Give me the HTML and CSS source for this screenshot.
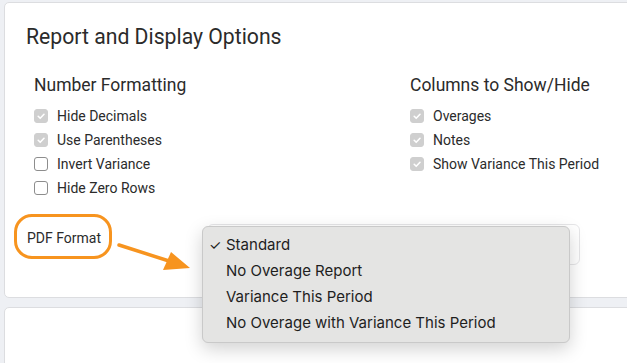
FILE: index.html
```html
<!DOCTYPE html>
<html>
<head>
<meta charset="utf-8">
<link rel="stylesheet" href="styles.css">
</head>
<body>
<div class="page">
  <section class="card options">
    <h1 class="title">Report and Display Options</h1>
    <div class="cols">
      <div class="col col-left">
        <h2 class="subtitle">Number Formatting</h2>
        <ul class="checks">
          <li><span class="box on"><svg viewBox="0 0 14 14"><path d="M4.2 7.3l2 2 3.8-4" /></svg></span>Hide Decimals</li>
          <li><span class="box on"><svg viewBox="0 0 14 14"><path d="M4.2 7.3l2 2 3.8-4" /></svg></span>Use Parentheses</li>
          <li><span class="box"></span>Invert Variance</li>
          <li><span class="box"></span>Hide Zero Rows</li>
        </ul>
      </div>
      <div class="col col-right">
        <h2 class="subtitle">Columns to Show/Hide</h2>
        <ul class="checks">
          <li><span class="box on"><svg viewBox="0 0 14 14"><path d="M4.2 7.3l2 2 3.8-4" /></svg></span>Overages</li>
          <li><span class="box on"><svg viewBox="0 0 14 14"><path d="M4.2 7.3l2 2 3.8-4" /></svg></span>Notes</li>
          <li><span class="box on"><svg viewBox="0 0 14 14"><path d="M4.2 7.3l2 2 3.8-4" /></svg></span>Show Variance This Period</li>
        </ul>
      </div>
    </div>
    <div class="pdf-row">
      <span class="pdf-label">PDF Format</span>
      <div class="select"></div>
    </div>
    <span class="ring"></span>
    <svg class="arrow" width="80" height="34" viewBox="0 0 80 34">
      <path d="M2 4 L52 20" stroke="#f7941f" stroke-width="3.5" stroke-linecap="round" fill="none"/>
      <polygon points="73,27 46,29 54,11" fill="#f7941f"/>
    </svg>
  </section>
  <section class="card second"></section>
  <div class="menu">
    <div class="item"><span class="tick">✓</span>Standard</div>
    <div class="item">No Overage Report</div>
    <div class="item">Variance This Period</div>
    <div class="item">No Overage with Variance This Period</div>
  </div>
</div>
</body>
</html>
```
FILE: styles.css
```css
html, body {
  margin: 0;
  padding: 0;
  width: 627px;
  height: 363px;
  overflow: hidden;
  background: #eef0f4;
}
.page {
  position: relative;
  padding: 2px 0 0 4px;
  display: flex;
  flex-direction: column;
  gap: 9px;
  font-family: Roboto, "Liberation Sans", sans-serif;
  color: #2b2b2b;
}
.card {
  background: #fff;
  border: 1px solid #dcdde0;
  border-radius: 5px;
  width: 660px;
  box-sizing: border-box;
}
.options {
  position: relative;
  height: 296px;
  padding: 21px 0 0 21px;
}
.title {
  margin: 0;
  font-size: 21.2px;
  font-weight: 400;
  line-height: 26px;
}
.cols {
  display: flex;
  margin-top: 24px;
  padding-left: 8px;
}
.col-left { width: 376px; }
.subtitle {
  margin: 0;
  font-size: 17.5px;
  font-weight: 400;
  line-height: 22px;
}
.checks {
  list-style: none;
  margin: 8px 0 0;
  padding: 0;
}
.checks li {
  display: flex;
  align-items: center;
  height: 24px;
  font-size: 14px;
  gap: 9px;
}
.box {
  width: 14px;
  height: 14px;
  box-sizing: border-box;
  border: 1px solid #8d8d8d;
  border-radius: 3px;
  background: #fff;
  display: flex;
}
.box.on {
  background: #cfcfcf;
  border-color: #cfcfcf;
}
.box svg {
  width: 14px;
  height: 14px;
  margin: -1px;
}
.box svg path {
  fill: none;
  stroke: #fff;
  stroke-width: 1.6;
  stroke-linecap: round;
  stroke-linejoin: round;
}
.pdf-row {
  display: flex;
  align-items: flex-start;
  margin-top: 24px;
  padding-left: 1px;
}
.pdf-label {
  font-size: 14px;
  line-height: 20px;
  padding-top: 4px;
  width: 180px;
}
.select {
  width: 373px;
  height: 41px;
  box-sizing: border-box;
  border: 1px solid #e6e6e8;
  border-radius: 6px;
}
.ring {
  position: absolute;
  left: 9px;
  top: 211px;
  width: 98px;
  height: 45px;
  box-sizing: border-box;
  border: 3px solid #f7941f;
  border-radius: 18px;
}
.arrow {
  position: absolute;
  left: 112px;
  top: 238px;
}
.second {
  height: 80px;
}
.menu {
  position: absolute;
  left: 202px;
  top: 226px;
  width: 368px;
  box-sizing: border-box;
  padding: 5px 0 6px;
  background: #e4e4e3;
  border: 1px solid #c9c9c9;
  border-radius: 6px;
  box-shadow: 0 6px 18px rgba(0,0,0,0.18);
  font-family: Inter, "Liberation Sans", sans-serif;
  font-size: 15px;
  color: #1e1e1e;
}
.item {
  position: relative;
  height: 26px;
  line-height: 26px;
  padding-left: 23px;
}
.tick {
  position: absolute;
  left: 6px;
  font-size: 14px;
}
```
